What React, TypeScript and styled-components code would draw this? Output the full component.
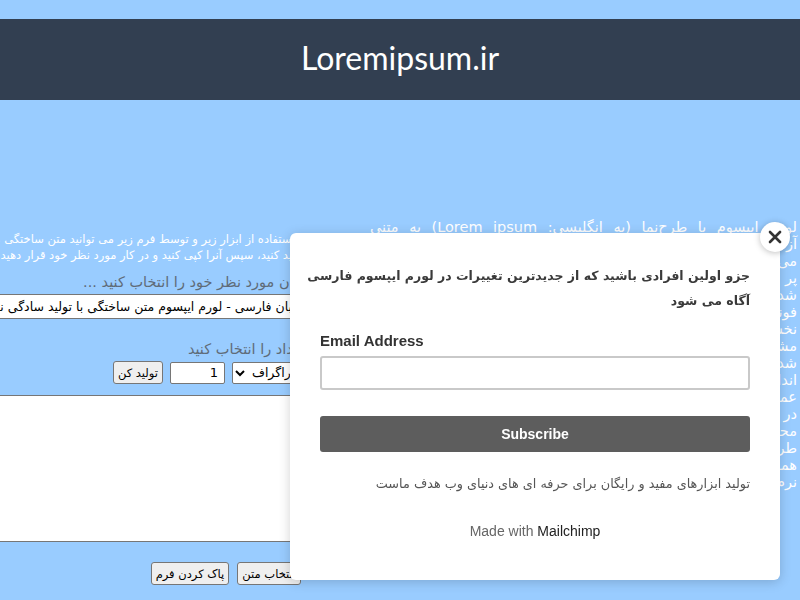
import React from "react";
import styled, { createGlobalStyle } from "styled-components";

const persian = `"DejaVu Sans", sans-serif`;

const GlobalStyle = createGlobalStyle`
  html, body {
    margin: 0;
    padding: 0;
    background: #99ccff;
    overflow: hidden;
  }
  body {
    font-family: ${persian};
  }
`;

const Page = styled.div`
  width: 800px;
  height: 600px;
  overflow: hidden;
  padding-top: 19px;
  box-sizing: border-box;
`;

const Header = styled.header`
  height: 81px;
  background-color: #323f51;
  display: flex;
  align-items: center;
  justify-content: center;
`;

const Logo = styled.div`
  font-family: "Lato", sans-serif;
  font-weight: 400;
  font-size: 32px;
  color: #fff;
  margin-top: -4px;
`;

const Main = styled.main`
  direction: rtl;
  display: flex;
  align-items: flex-start;
  gap: 65px;
  padding-right: 3px;
  overflow: hidden;
`;

const TextColumn = styled.div`
  flex: 0 0 427px;
  margin-top: 119px;
  color: #fff;
  font-size: 14.5px;
  line-height: 17px;
  text-align: justify;
`;

const FormColumn = styled.div`
  flex: 0 0 560px;
  margin-top: 131px;
  display: flex;
  flex-direction: column;
  align-items: stretch;
`;

const Intro = styled.p`
  margin: 0;
  color: #fff;
  font-size: 11.5px;
  line-height: 16px;
  white-space: nowrap;
`;

const Label = styled.div<{ $top: number }>`
  color: #5f6b78;
  font-size: 14.5px;
  line-height: 18px;
  margin-top: ${(p) => p.$top}px;
  margin-bottom: 3px;
  white-space: nowrap;
`;

const Select = styled.select<{ $width?: number; $height: number }>`
  font-family: ${persian};
  font-size: 12.5px;
  height: ${(p) => p.$height}px;
  width: ${(p) => (p.$width ? `${p.$width}px` : "100%")};
  background: #fff;
  color: #000;
  border: 1px solid #767676;
  border-radius: 2px;
  padding: 0 2px;
  direction: rtl;
`;

const Controls = styled.div`
  display: flex;
  gap: 7px;
  align-items: center;
`;

const NumberInput = styled.input`
  width: 55px;
  height: 22px;
  box-sizing: border-box;
  border: 1px solid #767676;
  border-radius: 2px;
  font-family: ${persian};
  font-size: 13px;
  text-align: right;
  padding: 0 6px;
  direction: rtl;
`;

const Button = styled.button`
  height: 23px;
  font-family: ${persian};
  font-size: 11.5px;
  color: #000;
  background: #efefef;
  border: 1px solid #767676;
  border-radius: 3px;
  padding: 0 4px;
  white-space: nowrap;
`;

const Output = styled.textarea`
  margin-top: 11px;
  height: 147px;
  box-sizing: border-box;
  width: 100%;
  border: 1px solid #767676;
  background: #fff;
  resize: none;
`;

const Actions = styled.div`
  display: flex;
  gap: 8px;
  margin-top: 20px;
  padding-right: 4px;
`;

const Overlay = styled.div`
  position: fixed;
  left: 290px;
  top: 233px;
  width: 490px;
  height: 347px;
  background: #fff;
  border-radius: 6px;
  box-shadow: 0 2px 12px rgba(0, 0, 0, 0.18);
  box-sizing: border-box;
  padding: 30px 30px 0;
  display: flex;
  flex-direction: column;
`;

const Close = styled.button`
  position: absolute;
  right: -10px;
  top: -11px;
  width: 30px;
  height: 30px;
  border-radius: 50%;
  border: none;
  background: #fff;
  box-shadow: 0 1px 6px rgba(0, 0, 0, 0.25);
  display: flex;
  align-items: center;
  justify-content: center;
  padding: 0;
`;

const Heading = styled.div`
  direction: rtl;
  font-family: ${persian};
  font-weight: bold;
  font-size: 12.5px;
  line-height: 25px;
  color: #3a3a3a;
  text-align: right;
  white-space: nowrap;
`;

const FieldLabel = styled.label`
  font-family: "Liberation Sans", Arial, sans-serif;
  font-weight: bold;
  font-size: 15px;
  color: #333;
  margin-top: 19px;
`;

const EmailInput = styled.input`
  margin-top: 7px;
  height: 34px;
  box-sizing: border-box;
  border: 2px solid #c9c9c9;
  border-radius: 3px;
`;

const Subscribe = styled.button`
  margin-top: 26px;
  height: 36px;
  border: none;
  border-radius: 3px;
  background: #5d5d5d;
  color: #fff;
  font-family: "Liberation Sans", Arial, sans-serif;
  font-weight: bold;
  font-size: 14px;
`;

const Note = styled.div`
  direction: rtl;
  margin-top: 24px;
  font-size: 12.8px;
  color: #555;
  text-align: right;
`;

const Credit = styled.div`
  margin-top: 32px;
  text-align: center;
  font-family: "Liberation Sans", Arial, sans-serif;
  font-size: 14px;
  color: #666;
`;

const Brand = styled.span`
  color: #222;
`;

const loremText =
  "لورم ایپسوم یا طرح‌نما (به انگلیسی: Lorem ipsum) به متنی آزمایشی و بی‌معنی در صنعت چاپ، صفحه‌آرایی و طراحی گرافیک گفته می‌شود. طراح گرافیک از این متن به عنوان عنصری از ترکیب‌بندی برای پر کردن صفحه و ارایه اولیه شکل ظاهری و کلی طرح سفارش گرفته شده استفاده می‌نماید، تا از نظر گرافیکی نشانگر چگونگی نوع و اندازه فونت و ظاهر متن باشد. معمولا طراحان گرافیک برای صفحه‌آرایی، نخست از متن‌های آزمایشی و بی‌معنی استفاده می‌کنند تا صرفا به مشتری یا صاحب کار خود نشان دهند که صفحه طراحی یا صفحه بندی شده بعد از اینکه متن در آن قرار گیرد چگونه به نظر می‌رسد و قلم‌ها و اندازه‌بندی‌ها چگونه در نظر گرفته شده‌است. از آنجایی که طراحان عموما نویسنده متن نیستند و وظیفه رعایت حق تکثیر متون را ندارند و در همان حال کار آنها به نوعی وابسته به متن می‌باشد آنها با استفاده از محتویات ساختگی، صفحه گرافیکی خود را صفحه‌آرایی می‌کنند تا مرحله طراحی و صفحه‌بندی را به پایان برند. صنعت چاپ و صفحه‌آرایی همواره به این متن‌ها نیاز داشته است و این متن‌ها در بسیاری از نرم‌افزارها به کار می‌روند.";

export default function App() {
  return (
    <>
      <GlobalStyle />
      <Page>
        <Header>
          <Logo>Loremipsum.ir</Logo>
        </Header>
        <Main>
          <TextColumn>{loremText}</TextColumn>
          <FormColumn>
            <Intro>
              با استفاده از ابزار زیر و توسط فرم زیر می توانید متن ساختگی مورد نظر خود را در واحد دلخواه
              <br />
              تولید کنید، سپس آنرا کپی کنید و در کار مورد نظر خود قرار دهید و از آن استفاده نمایید
            </Intro>
            <Label $top={10}>زبان مورد نظر خود را انتخاب کنید ...</Label>
            <Select $height={25}>
              <option>زبان فارسی - لورم ایپسوم متن ساختگی با تولید سادگی نامفهوم از صنعت چاپ و با استفاده از طراحان گرافیک است</option>
            </Select>
            <Label $top={21}>تعداد را انتخاب کنید</Label>
            <Controls>
              <Select $width={73} $height={22}>
                <option>پاراگراف</option>
                <option>جمله</option>
                <option>کلمه</option>
              </Select>
              <NumberInput type="text" defaultValue="1" />
              <Button>تولید کن</Button>
            </Controls>
            <Output />
            <Actions>
              <Button>انتخاب متن</Button>
              <Button>پاک کردن فرم</Button>
            </Actions>
          </FormColumn>
        </Main>
        <Overlay>
          <Close aria-label="close">
            <svg width="14" height="14" viewBox="0 0 14 14">
              <path d="M2 2 L12 12 M12 2 L2 12" stroke="#333" strokeWidth="2.6" strokeLinecap="round" />
            </svg>
          </Close>
          <Heading>
            جزو اولین افرادی باشید که از جدیدترین تغییرات در لورم ایپسوم فارسی
            <br />
            آگاه می شود
          </Heading>
          <FieldLabel>Email Address</FieldLabel>
          <EmailInput type="email" />
          <Subscribe>Subscribe</Subscribe>
          <Note>تولید ابزارهای مفید و رایگان برای حرفه ای های دنیای وب هدف ماست</Note>
          <Credit>
            Made with <Brand>Mailchimp</Brand>
          </Credit>
        </Overlay>
      </Page>
    </>
  );
}
